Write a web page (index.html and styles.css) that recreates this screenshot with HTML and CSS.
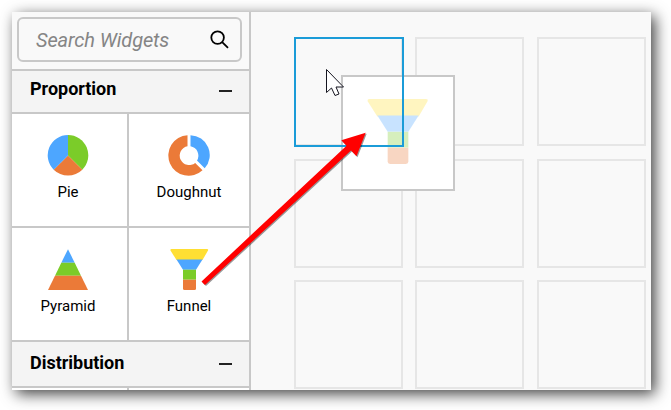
FILE: index.html
```html
<!DOCTYPE html>
<html lang="en">
<head>
<meta charset="utf-8">
<title>Widgets</title>
<link rel="stylesheet" href="styles.css">
</head>
<body>
<svg width="0" height="0" class="defs">
  <symbol id="funnel" viewBox="0 0 39 41">
    <path fill="#ffdf33" d="M1.500 0h35.500q1.700 0 1 1.500L32.500 11h-26L.5 1.500Q0 0 1.500 0z"/>
    <path fill="#4da6ff" d="M6.500 10.400h26L26 20.700H13z"/>
    <path fill="#7bcc29" d="M13 20.700h13v10H13z"/>
    <path fill="#eb7a38" d="M13 30.700h13v8.800q0 1.500-1.500 1.500h-10q-1.500 0-1.500-1.500z"/>
  </symbol>
</svg>
<div class="window">
  <aside class="sidebar">
    <div class="search-bar">
      <div class="search">
        <span class="placeholder">Search Widgets</span>
        <svg class="search-icon" width="19" height="19" viewBox="0 0 19 19"><circle cx="7.600" cy="7.600" r="6.300"/><path d="M12.200 12.100l5.800 5.700"/></svg>
      </div>
    </div>
    <div class="section"><h2>Proportion</h2><span class="collapse"></span></div>
    <div class="widgets">
      <div class="widget">
        <svg width="42" height="41" viewBox="0 0 42 41">
          <path fill="#7bcc29" d="M21 20.500V0A20.300 20.300 0 0 1 35.300 34.700z"/>
          <path fill="#eb7a38" d="M21 20.500L35.300 34.700A20.300 20.300 0 0 1 6.700 34.700z"/>
          <path fill="#4da6ff" d="M21 20.500L6.700 34.700A20.300 20.300 0 0 1 21 0z"/>
        </svg>
        <span>Pie</span>
      </div>
      <div class="widget">
        <svg width="42" height="41" viewBox="0 0 42 41">
          <path fill="#eb7a38" d="M19.500 .2A20.300 20.300 0 1 0 34.500 35.300L27.200 27.900A9.500 9.500 0 1 1 19.500 11.200z"/>
          <path fill="#4da6ff" d="M22.500 .2A19.800 19.800 0 0 1 36.700 33.200L29 25.500A9.500 9.500 0 0 0 22.500 11.200z"/>
        </svg>
        <span>Doughnut</span>
      </div>
      <div class="widget">
        <svg width="42" height="41" viewBox="0 0 42 41">
          <path fill="#4da6ff" d="M21 .2L27.700 13.800H14.300z"/>
          <path fill="#7bcc29" d="M14.300 13.800h13.400l6.300 13H8z"/>
          <path fill="#eb7a38" d="M8 26.800h26L41 41H1z"/>
        </svg>
        <span>Pyramid</span>
      </div>
      <div class="widget">
        <svg width="39" height="41"><use href="#funnel"/></svg>
        <span>Funnel</span>
      </div>
    </div>
    <div class="section section-lower"><h2>Distribution</h2><span class="collapse"></span></div>
    <div class="widgets">
      <div class="widget"></div>
      <div class="widget"></div>
    </div>
  </aside>
  <main class="canvas">
    <div class="slot"></div><div class="slot"></div><div class="slot"></div>
    <div class="slot"></div><div class="slot"></div><div class="slot"></div>
    <div class="slot"></div><div class="slot"></div><div class="slot"></div>
  </main>
</div>
<div class="drag-card"><svg width="62" height="65" viewBox="0 0 39 41" preserveAspectRatio="none"><use href="#funnel"/></svg></div>
<div class="drop-target"></div>
<svg class="overlay" width="671" height="410" viewBox="0 0 671 410">
  <path class="cursor" d="M326.500 69.500V92.500L331.500 88L335 95.500L339 94L336 87H343.500z"/>
  <path class="arrow" d="M201.500 281.500L346.500 145.800L341.300 140.200L365.700 132.800L356.500 156.300L351 150.400L205 285z"/>
</svg>
</body>
</html>
```
FILE: styles.css
```css
* { box-sizing: border-box; }
body { margin: 0; width: 671px; height: 410px; overflow: hidden; position: relative; background: #fff; color: #000; font-family: Roboto, "Liberation Sans", sans-serif; }
.defs { position: absolute; }
.window { display: flex; width: 639px; height: 378px; margin: 12px; background: #f9f9f9; box-shadow: 4px 4px 14px rgba(0, 0, 0, .75); }
.sidebar { width: 239px; height: 378px; overflow: hidden; border-right: 2px solid #c8c8c8; }
.search-bar { height: 59px; padding: 5px 7px 0 5px; border-bottom: 2px solid #c8c8c8; }
.search { display: flex; align-items: center; justify-content: space-between; height: 45px; padding: 0 12px 0 17px; border: 2px solid #c8c8c8; border-radius: 6px; }
.placeholder { font-size: 20px; font-style: italic; line-height: 24px; letter-spacing: -.12px; color: #858585; }
.search-icon { position: relative; left: .5px; fill: none; stroke: #000; stroke-width: 1.8; }
.section { display: flex; align-items: center; justify-content: space-between; height: 43px; padding: 0 17px 5px 18px; background: #f4f4f4; border-bottom: 2px solid #c8c8c8; }
.section-lower { height: 46px; padding-bottom: 3px; }
.section h2 { margin: 0; font-size: 18px; font-weight: 700; line-height: 22px; letter-spacing: -.02px; }
.collapse { width: 13px; height: 2px; margin-top: 3px; background: #222; }
.widgets { display: grid; grid-template-columns: 117px 120px; grid-auto-rows: 114px; }
.widget { display: flex; flex-direction: column; align-items: center; gap: 6px; padding-top: 21px; background: #fff; border-bottom: 2px solid #c8c8c8; font-size: 15px; line-height: 20px; }
.widget:nth-child(odd) { border-right: 2px solid #c8c8c8; padding-right: 3px; }
.canvas { display: grid; grid-template-columns: repeat(3, 109px); grid-template-rows: repeat(3, 109px); gap: 12.4px 12.3px; padding: 25.2px 0 0 43px; }
.slot { border: 2px solid #e6e6e6; }
.drag-card { position: absolute; left: 341px; top: 75px; display: flex; justify-content: center; width: 114px; height: 116px; padding-top: 22px; background: #fff; border: 2px solid #c8c8c8; }
.drag-card svg { opacity: .3; }
.drop-target { position: absolute; left: 294px; top: 37px; width: 110px; height: 110px; border: 2px solid #1b9cd8; }
.overlay { position: absolute; left: 0; top: 0; }
.cursor { fill: #fff; stroke: #151520; stroke-width: 1; }
.arrow { fill: #f00; filter: drop-shadow(1px 1px .5px rgba(0, 0, 0, .4)); }
```
